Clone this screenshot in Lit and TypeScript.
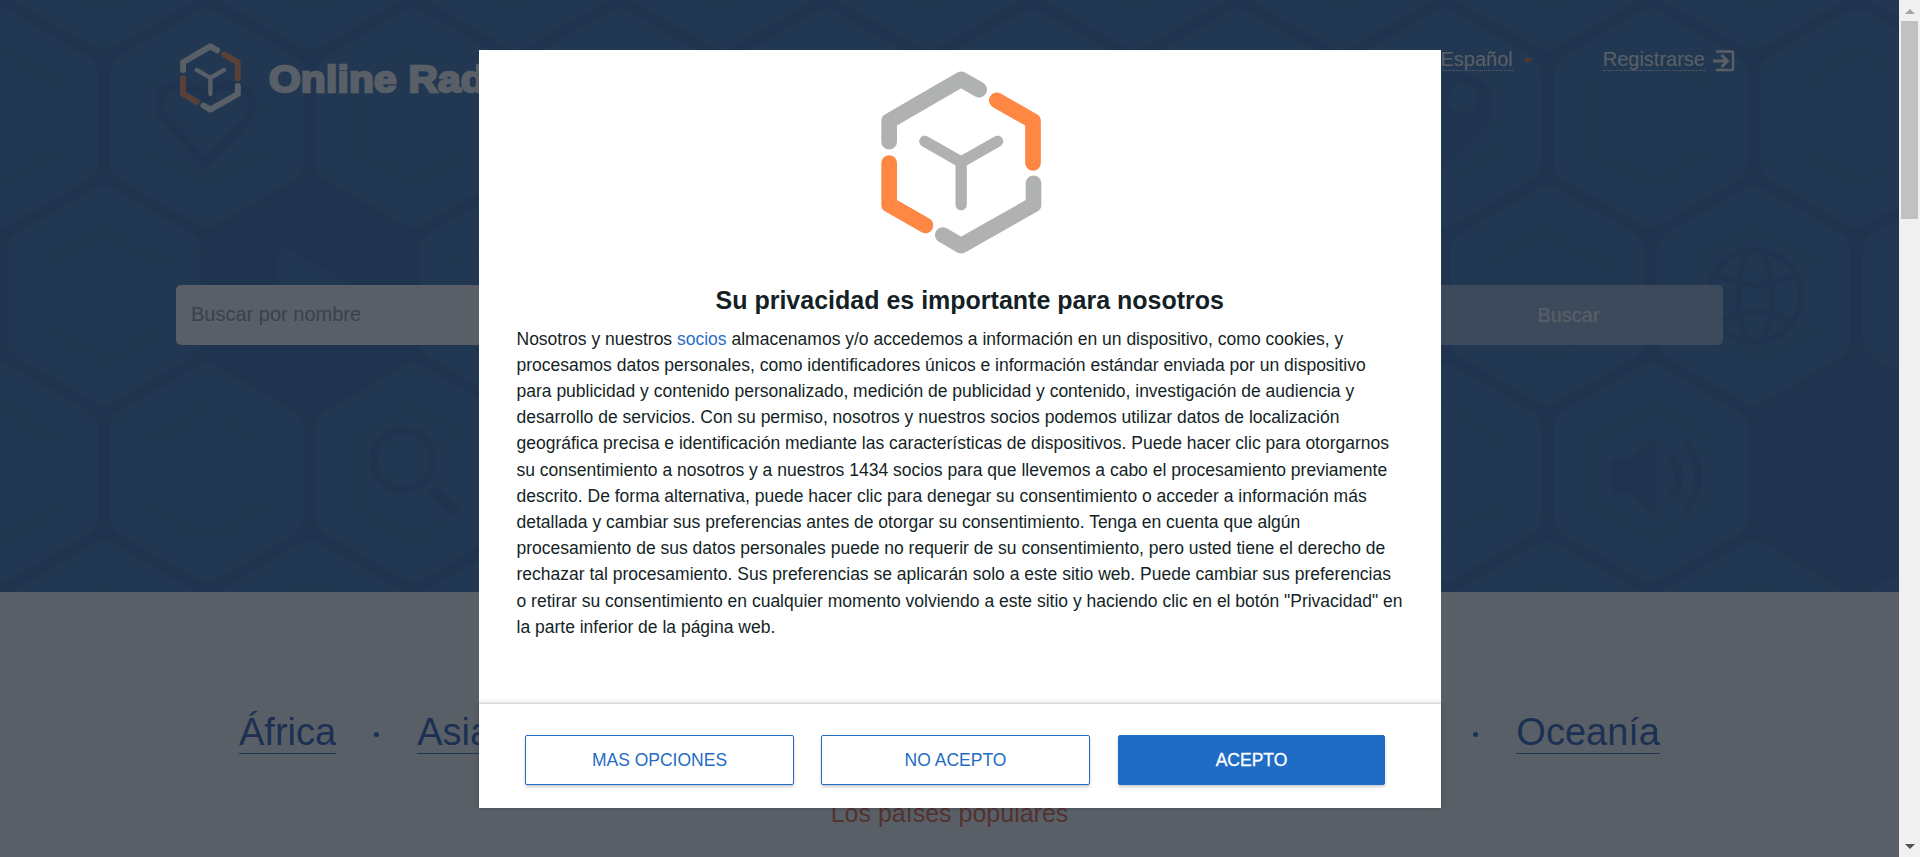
import { LitElement, html, css, svg } from "lit";
import { customElement } from "lit/decorators.js";

const HEX = "0,-89 77,-44.5 77,44.5 0,89 -77,44.5 -77,-44.5";
const PITCH = 206.2;

const cells: [number, number][] = [];
for (let row = -1; row < 4; row++) {
  for (let col = -1; col < 10; col++) {
    if (row === 1 && col === 1) continue;
    if (row === 2 && col === 8) continue;
    cells.push([(row % 2 === 0 ? 207 : 104) + col * PITCH, 118 + row * 177.4]);
  }
}

const logo = (cls: string) => html`
  <svg class=${cls} viewBox="63 63 482 549" fill="none" stroke-linecap="round" stroke-linejoin="round">
    <g class="main" stroke-width="47">
      <path d="M357 119L303 88L87 213V275" />
      <path d="M520 400V464L303 587L248 555" />
    </g>
    <g stroke="#ff8744" stroke-width="47">
      <path d="M410 151L518.500 213V339" />
      <path d="M87 339V464L196 526" />
    </g>
    <path class="main" stroke-width="34" d="M194 274L303 336L412 274M303 336V464" />
  </svg>
`;

@customElement("app-root")
export class AppRoot extends LitElement {
  static styles = css`
    :host { display: block; position: relative; height: 857px; overflow: hidden; font-family: "Liberation Sans", Arial, sans-serif; }
    * { box-sizing: border-box; }
    .shell { display: grid; grid-template-columns: 1899px 21px; height: 857px; isolation: isolate; }
    .page { background: #fff; overflow: hidden; }
    .hero { display: grid; height: 592px; background: #1e569f; }
    .pattern, .hero-body { grid-area: 1 / 1; }
    .pattern { width: 1899px; height: 592px; }
    .hero-body { z-index: 1; padding: 0 176px; }
    .top { display: flex; align-items: flex-start; height: 285px; padding: 43px 0 0 4px; color: #fff; }
    .brand { display: flex; align-items: flex-start; }
    .mark { width: 61px; height: 70px; }
    .mark .main { stroke: #fff; }
    .name { margin: 14px 0 0 28px; font-weight: bold; font-size: 37.500px; line-height: 44px; letter-spacing: 0.200px; transform: scaleX(1.085); transform-origin: 0 0; -webkit-text-stroke: 2.300px #fff; white-space: nowrap; }
    .nav { display: flex; margin-left: auto; font-size: 20px; line-height: 23px; padding-top: 5px; }
    .nav span { border-bottom: 1px dotted #fff; height: 23px; }
    .caret { width: 10px; height: 5px; margin: 10px 70px 0 10px; fill: #e8621f; }
    .enter { width: 23px; height: 23px; margin: 1px -12px 0 7px; }
    .search { display: flex; height: 60px; border-radius: 5px; overflow: hidden; font-size: 20px; line-height: 60px; }
    .field { flex: 1; background: #fff; color: #7d8b90; padding-left: 15px; line-height: 58px; }
    .go { width: 308px; background: #8dadd0; color: #fff; text-align: center; padding-right: 1px; }
    .continents { display: flex; align-items: center; margin: 117px 239px 0; color: #0a44b0; font-size: 38px; line-height: 46px; }
    .continents span { border-bottom: 1px solid #1650b0; height: 45px; }
    .continents i { width: 5px; height: 5px; border-radius: 50%; background: #0a44b0; margin: 6px 38px 0; }
    .gap { flex: 1; }
    .popular { margin-top: 45px; text-align: center; font-size: 25px; line-height: 28px; color: #e8511c; }
    .bar { background: #f0f0f0; display: flex; flex-direction: column; align-items: center; justify-content: space-between; }
    .bar svg { width: 10px; height: 5px; margin: 9px 0 8px; }
    .thumb { width: 17px; height: 198px; background: #c1c1c1; margin: -1px 0 auto; }
    .shade { position: absolute; inset: 0 21px 0 0; background: rgba(33, 41, 52, 0.75); }
    .modal { position: absolute; left: 479px; top: 50px; width: 962px; height: 758px; background: #fff; display: flex; flex-direction: column; color: #141f26; }
    .body { flex: 1; padding: 21px 18px 0 37.500px; }
    .crest { display: block; width: 161px; height: 183px; margin: 0 auto 0 364px; }
    .crest .main { stroke: #b0b2b1; }
    h2 { margin: 32px 0 0; text-align: center; font-size: 25px; line-height: 29px; }
    p { margin: 10.500px 0 0; font-size: 17.500px; line-height: 26.200px; white-space: nowrap; }
    p a { color: #2a6cc8; }
    .foot { height: 105px; border-top: 1px solid #d8d8d8; box-shadow: 0 0 5px rgba(0, 0, 0, 0.2); padding: 31px 56px 0 46px; display: flex; }
    .foot button { width: 269px; height: 50px; margin-right: 27px; border: 1px solid #1f6cc5; border-radius: 2px; background: #fff; color: #1f6cc5; font: 17.500px "Liberation Sans", Arial, sans-serif; box-shadow: 0 2px 3px rgba(0, 0, 0, 0.2); padding: 0; }
    .foot .yes { width: 267px; margin: 0 0 0 1px; background: #1f6cc5; color: #fff; -webkit-text-stroke: 0.300px #fff; }
  `;

  render() {
    return html`
      <div class="shell">
        <div class="page">
          <section class="hero">
            <svg class="pattern" viewBox="0 0 1899 592">
              <g fill="#2460a6" stroke="#2460a6" stroke-width="40" stroke-linejoin="round">
                ${cells.map(([x, y]) => svg`<polygon points=${HEX} transform="translate(${x} ${y})" />`)}
              </g>
              <path fill="#225da5" d="M278 256Q280 248 289 249L355 286L420 330V345H278Z" />
              <g fill="none" stroke="#1e569f">
                <path stroke-width="9" d="M206 163L169 124C150 104 163 85 180 85C194 85 201 90 206 98C211 90 218 85 232 85C249 85 262 104 243 124Z" />
                <circle cx="403" cy="460" r="30" stroke-width="8" />
                <g stroke-width="6">
                  <circle cx="1755" cy="296" r="46" />
                  <ellipse cx="1755" cy="296" rx="17" ry="46" />
                  <path d="M1715 274Q1755 296 1795 274M1715 324Q1755 300 1795 324" />
                </g>
                <path stroke-width="8" stroke-linecap="round" d="M1673 459Q1685 476 1673 494M1687 444Q1710 476 1687 509" />
              </g>
              <g fill="#1e569f">
                <path d="M437 485L428 493L448 514Q456 520 459 513Q460 509 457 506Z" />
                <path d="M1611 459H1629L1652 440H1656V514H1652L1629 494H1611Z" />
                <path fill-rule="evenodd" d="M1463 73A29 29 0 0 1 1492 102V113Q1491 120 1486 125L1440 171V73ZM1463 84A14.500 14.500 0 1 0 1463 113A14.500 14.500 0 1 0 1463 84Z" />
              </g>
            </svg>
            <div class="hero-body">
              <header class="top">
                <div class="brand">${logo("mark")}<div class="name">Online Rad</div></div>
                <nav class="nav">
                  <span>Español</span>
                  <svg class="caret" viewBox="0 0 10 5"><path d="M0 0H10L5 5Z" /></svg>
                  <span>Registrarse</span>
                  <svg class="enter" viewBox="0 0 23 23" fill="none" stroke="#fff" stroke-width="2.500"><path d="M4 2.500H19.500Q21 2.500 21 4V19.500Q21 21 19.500 21H4" /><path stroke-width="3" d="M1 12H15M9.500 6L15.500 12L9.500 18" /></svg>
                </nav>
              </header>
              <div class="search"><div class="field">Buscar por nombre</div><div class="go">Buscar</div></div>
            </div>
          </section>
          <div class="continents"><span>África</span><i></i><span>Asia</span><div class="gap"></div><i></i><span>Oceanía</span></div>
          <div class="popular">Los países populares</div>
        </div>
        <div class="bar">
          <svg viewBox="0 0 10 5"><path fill="#a3a3a3" d="M0 5L5 0L10 5Z" /></svg>
          <div class="thumb"></div>
          <svg viewBox="0 0 10 5"><path fill="#505050" d="M0 0H10L5 5Z" /></svg>
        </div>
      </div>
      <div class="shade"></div>
      <div class="modal">
        <div class="body">
          ${logo("crest")}
          <h2>Su privacidad es importante para nosotros</h2>
          <p>Nosotros y nuestros <a>socios</a> almacenamos y/o accedemos a información en un dispositivo, como cookies, y<br />procesamos datos personales, como identificadores únicos e información estándar enviada por un dispositivo<br />para publicidad y contenido personalizado, medición de publicidad y contenido, investigación de audiencia y<br />desarrollo de servicios. Con su permiso, nosotros y nuestros socios podemos utilizar datos de localización<br />geográfica precisa e identificación mediante las características de dispositivos. Puede hacer clic para otorgarnos<br />su consentimiento a nosotros y a nuestros 1434 socios para que llevemos a cabo el procesamiento previamente<br />descrito. De forma alternativa, puede hacer clic para denegar su consentimiento o acceder a información más<br />detallada y cambiar sus preferencias antes de otorgar su consentimiento. Tenga en cuenta que algún<br />procesamiento de sus datos personales puede no requerir de su consentimiento, pero usted tiene el derecho de<br />rechazar tal procesamiento. Sus preferencias se aplicarán solo a este sitio web. Puede cambiar sus preferencias<br />o retirar su consentimiento en cualquier momento volviendo a este sitio y haciendo clic en el botón "Privacidad" en<br />la parte inferior de la página web.</p>
        </div>
        <div class="foot"><button>MAS OPCIONES</button><button>NO ACEPTO</button><button class="yes">ACEPTO</button></div>
      </div>
    `;
  }
}
